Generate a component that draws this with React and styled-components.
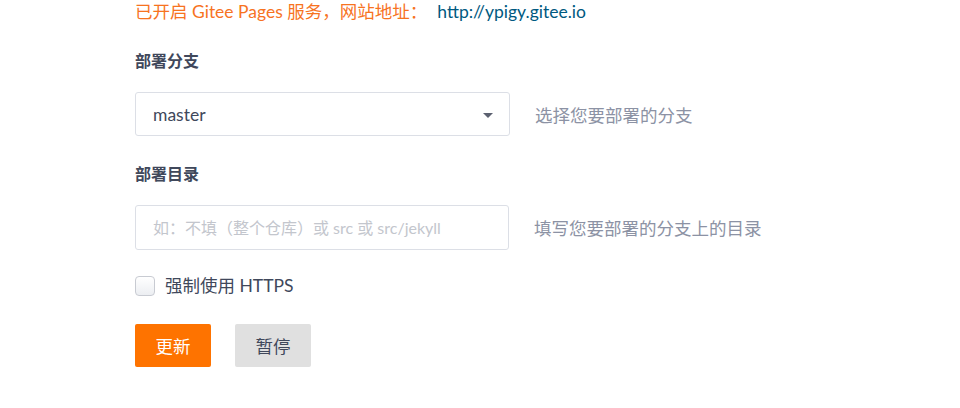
import React, { useState } from "react";
import styled, { createGlobalStyle } from "styled-components";

const GlobalStyle = createGlobalStyle`
    body {
        margin: 0;
        background: #fff;
        font-family: Lato, "Noto Sans CJK SC", sans-serif;
    }
`

const Page = styled.div`
    display: flex;
    flex-direction: column;
    align-items: flex-start;
    padding-left: 135px;
    width: 960px;
    height: 408px;
    box-sizing: border-box;
`

const Notice = styled.div`
    font-size: 17.5px;
    line-height: 24px;
    color: #f7731f;

    a {
        color: #005980;
        text-decoration: none;
        margin-left: 10px;
    }
`

const Label = styled.div`
    margin-top: ${p => p.$top}px;
    font-size: 16px;
    line-height: 22px;
    font-weight: 700;
    color: #40485b;
`

const Row = styled.div`
    display: flex;
    align-items: center;
    gap: 25px;
    margin-top: 20px;
`

const Select = styled.div`
    width: 375px;
    height: 44px;
    box-sizing: border-box;
    display: flex;
    align-items: center;
    justify-content: space-between;
    padding: 0 16px 0 17px;
    border: 1px solid #dcdfe6;
    border-radius: 3px;
    font-size: 17.5px;
    color: #40485b;
`

const Caret = styled.span`
    width: 0;
    height: 0;
    border-left: 5px solid transparent;
    border-right: 5px solid transparent;
    border-top: 5px solid #5c6170;
    margin-top: 2px;
`

const Input = styled.input`
    width: 374px;
    height: 45px;
    box-sizing: border-box;
    padding: 0 17px;
    border: 1px solid #dcdfe6;
    border-radius: 3px;
    outline: 0;
    font-family: inherit;
    font-size: 16px;
    color: #40485b;

    &::placeholder {
        color: #c3c6cd;
    }
`

const Hint = styled.span`
    font-size: 17.5px;
    color: #8c92a4;
`

const Check = styled.label`
    display: flex;
    align-items: center;
    gap: 10px;
    margin-top: 26px;
    font-size: 17.5px;
    line-height: 20px;
    color: #40485b;
    cursor: pointer;
`

const Box = styled.span`
    width: 20px;
    height: 20px;
    box-sizing: border-box;
    border: 1px solid #c8cbd2;
    border-radius: 4px;
    background: ${p => p.$on ? "#fe7300" : "linear-gradient(#fff, #eceef2)"};
`

const Buttons = styled.div`
    display: flex;
    gap: 24px;
    margin-top: 28px;
`

const Button = styled.button`
    width: 76px;
    height: 43px;
    border: 0;
    border-radius: 2px;
    font-family: inherit;
    font-size: 17.5px;
    cursor: pointer;
    background: ${p => p.$primary ? "#fe7300" : "#e0e0e0"};
    color: ${p => p.$primary ? "#fff" : "#40485b"};
`

export default function App() {
    const [https, setHttps] = useState(false)

    return (
        <>
            <GlobalStyle />
            <Page>
                <Notice>
                    已开启 Gitee Pages 服务，网站地址：
                    <a href="#">http://ypigy.gitee.io</a>
                </Notice>

                <Label $top={26}>部署分支</Label>
                <Row>
                    <Select>
                        master
                        <Caret />
                    </Select>
                    <Hint>选择您要部署的分支</Hint>
                </Row>

                <Label $top={27}>部署目录</Label>
                <Row>
                    <Input placeholder="如：不填（整个仓库）或 src 或 src/jekyll" />
                    <Hint>填写您要部署的分支上的目录</Hint>
                </Row>

                <Check onClick={() => setHttps(!https)}>
                    <Box $on={https} />
                    强制使用 HTTPS
                </Check>

                <Buttons>
                    <Button $primary>更新</Button>
                    <Button>暂停</Button>
                </Buttons>
            </Page>
        </>
    );
}
